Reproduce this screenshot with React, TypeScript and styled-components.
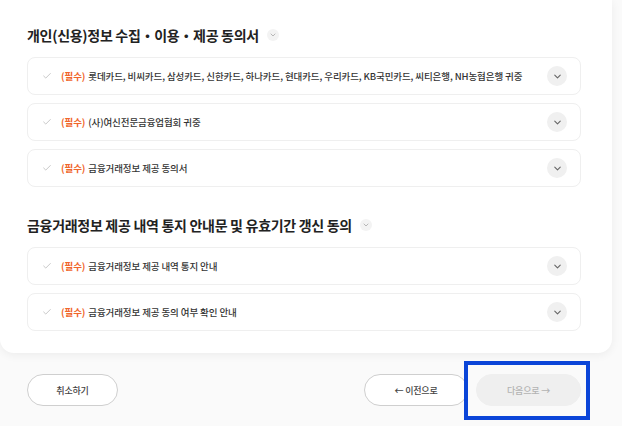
import React from 'react';
import styled, { createGlobalStyle } from 'styled-components';
import { Check, ChevronDown } from 'lucide-react';

const GlobalStyle = createGlobalStyle`
  body {
    margin: 0;
    background: #fafafa;
    font-family: 'Noto Sans CJK KR', 'Noto Sans', sans-serif;
    color: #222;
  }
`;

const Page = styled.div`
  width: 622px;
  height: 426px;
  overflow: hidden;
  position: relative;
`;

const Card = styled.div`
  width: 612px;
  box-sizing: border-box;
  background: #fff;
  border-radius: 0 0 14px 14px;
  box-shadow: 0 2px 10px rgba(0, 0, 0, 0.06);
  padding: 25px 31px 22px 27px;
  display: flex;
  flex-direction: column;
  gap: 28px;
`;

const Section = styled.section`
  display: flex;
  flex-direction: column;
  gap: 12px;
`;

const Title = styled.h2`
  margin: 0;
  height: 20px;
  display: flex;
  align-items: center;
  gap: 8px;
  font-size: 14px;
  font-weight: 700;
  letter-spacing: -0.3px;
  color: #222;
`;

const TitleToggle = styled.span`
  width: 12px;
  height: 12px;
  border-radius: 50%;
  background: #f3f3f3;
  color: #999;
  display: inline-flex;
  align-items: center;
  justify-content: center;
`;

const List = styled.div`
  display: flex;
  flex-direction: column;
  gap: 8px;
`;

const Row = styled.div`
  height: 38px;
  box-sizing: border-box;
  border: 1px solid #efefef;
  border-radius: 8px;
  padding: 0 13px 0 14px;
  display: flex;
  align-items: center;
  gap: 9px;
`;

const Label = styled.span`
  flex: 1;
  font-size: 9.5px;
  font-weight: 500;
  letter-spacing: -0.1px;
  color: #333;
  white-space: nowrap;
`;

const Required = styled.b`
  color: #f0652a;
  font-weight: 700;
  margin-right: 3px;
`;

const Toggle = styled.span`
  width: 20px;
  height: 20px;
  border-radius: 50%;
  background: #f0f0f0;
  color: #666;
  display: inline-flex;
  align-items: center;
  justify-content: center;
`;

const Footer = styled.div`
  width: 612px;
  box-sizing: border-box;
  padding: 21px 31px 0 27px;
  display: flex;
  align-items: center;
  gap: 8px;
`;

const PillButton = styled.button<{ $filled?: boolean; $width: number }>`
  width: ${({ $width }) => $width}px;
  height: 32px;
  border-radius: 16px;
  border: 1px solid ${({ $filled }) => ($filled ? '#efefef' : '#cfcfcf')};
  background: ${({ $filled }) => ($filled ? '#efefef' : '#fff')};
  color: ${({ $filled }) => ($filled ? '#b3b3b3' : '#444')};
  font-family: inherit;
  font-size: 9px;
  font-weight: 500;
  letter-spacing: -0.2px;
  padding: 0;
`;

const Spacer = styled.div`
  flex: 1;
`;

const Highlight = styled.div`
  position: absolute;
  left: 464px;
  top: 361px;
  width: 126px;
  height: 59px;
  box-sizing: border-box;
  border: 4px solid #0b45d8;
`;

const consentGroups = [
  {
    title: '개인(신용)정보 수집・이용・제공 동의서',
    items: [
      '롯데카드, 비씨카드, 삼성카드, 신한카드, 하나카드, 현대카드, 우리카드, KB국민카드, 씨티은행, NH농협은행 귀중',
      '(사)여신전문금융업협회 귀중',
      '금융거래정보 제공 동의서',
    ],
  },
  {
    title: '금융거래정보 제공 내역 통지 안내문 및 유효기간 갱신 동의',
    items: ['금융거래정보 제공 내역 통지 안내', '금융거래정보 제공 동의 여부 확인 안내'],
  },
];

const App = () => (
  <Page>
    <GlobalStyle />
    <Card>
      {consentGroups.map((group) => (
        <Section key={group.title}>
          <Title>
            {group.title}
            <TitleToggle>
              <ChevronDown size={8} strokeWidth={2} />
            </TitleToggle>
          </Title>
          <List>
            {group.items.map((item) => (
              <Row key={item}>
                <Check size={10} color='#bdbdbd' strokeWidth={2} />
                <Label>
                  <Required>(필수)</Required>
                  {item}
                </Label>
                <Toggle>
                  <ChevronDown size={11} strokeWidth={2.4} />
                </Toggle>
              </Row>
            ))}
          </List>
        </Section>
      ))}
    </Card>
    <Footer>
      <PillButton $width={91}>취소하기</PillButton>
      <Spacer />
      <PillButton $width={104}>← 이전으로</PillButton>
      <PillButton $width={105} $filled>
        다음으로 →
      </PillButton>
    </Footer>
    <Highlight />
  </Page>
);

export default App;
